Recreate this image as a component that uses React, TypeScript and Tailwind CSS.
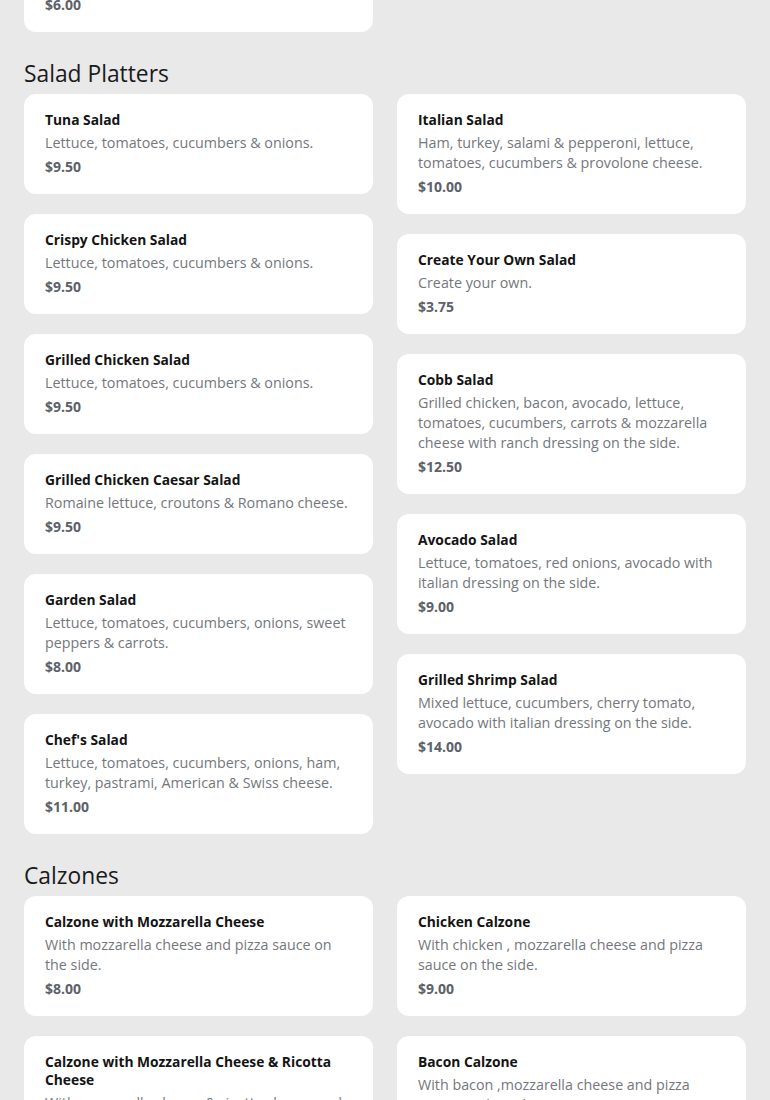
type Item = { name: string; desc: string; price: string };

type Section = { title?: string; left: Item[]; right: Item[] };

const SECTIONS: Section[] = [
  {
    left: [
      {
        name: "Side of French Fries",
        desc: "Crispy golden fries.",
        price: "$6.00",
      },
    ],
    right: [],
  },
  {
    title: "Salad Platters",
    left: [
      { name: "Tuna Salad", desc: "Lettuce, tomatoes, cucumbers & onions.", price: "$9.50" },
      { name: "Crispy Chicken Salad", desc: "Lettuce, tomatoes, cucumbers & onions.", price: "$9.50" },
      { name: "Grilled Chicken Salad", desc: "Lettuce, tomatoes, cucumbers & onions.", price: "$9.50" },
      { name: "Grilled Chicken Caesar Salad", desc: "Romaine lettuce, croutons & Romano cheese.", price: "$9.50" },
      { name: "Garden Salad", desc: "Lettuce, tomatoes, cucumbers, onions, sweet peppers & carrots.", price: "$8.00" },
      {
        name: "Chef's Salad",
        desc: "Lettuce, tomatoes, cucumbers, onions, ham, turkey, pastrami, American & Swiss cheese.",
        price: "$11.00",
      },
    ],
    right: [
      {
        name: "Italian Salad",
        desc: "Ham, turkey, salami & pepperoni, lettuce, tomatoes, cucumbers & provolone cheese.",
        price: "$10.00",
      },
      { name: "Create Your Own Salad", desc: "Create your own.", price: "$3.75" },
      {
        name: "Cobb Salad",
        desc: "Grilled chicken, bacon, avocado, lettuce, tomatoes, cucumbers, carrots & mozzarella cheese with ranch dressing on the side.",
        price: "$12.50",
      },
      {
        name: "Avocado Salad",
        desc: "Lettuce, tomatoes, red onions, avocado with italian dressing on the side.",
        price: "$9.00",
      },
      {
        name: "Grilled Shrimp Salad",
        desc: "Mixed lettuce, cucumbers, cherry tomato, avocado with italian dressing on the side.",
        price: "$14.00",
      },
    ],
  },
  {
    title: "Calzones",
    left: [
      {
        name: "Calzone with Mozzarella Cheese",
        desc: "With mozzarella cheese and pizza sauce on the side.",
        price: "$8.00",
      },
      {
        name: "Calzone with Mozzarella Cheese & Ricotta Cheese",
        desc: "With mozzarella cheese & ricotta cheese and pizza sauce on the side.",
        price: "$9.00",
      },
    ],
    right: [
      {
        name: "Chicken Calzone",
        desc: "With chicken , mozzarella cheese and pizza sauce on the side.",
        price: "$9.00",
      },
      {
        name: "Bacon Calzone",
        desc: "With bacon ,mozzarella cheese and pizza sauce on the side.",
        price: "$9.00",
      },
    ],
  },
];

function MenuCard({ item }: { item: Item }) {
  return (
    <div className="flex flex-col gap-1 rounded-xl bg-white px-[21px] pb-[17px] pt-[17px]">
      <h3 className="text-[13.8px] font-bold leading-[18px] text-[#141414]">{item.name}</h3>
      <p className="text-[14.3px] leading-5 text-[#74777d]">{item.desc}</p>
      <p className="text-[14px] font-bold leading-5 text-[#5c616a]">{item.price}</p>
    </div>
  );
}

export default function App() {
  return (
    <div
      className="min-h-[1100px] bg-[#e9e9e9] px-6 pb-10"
      style={{ fontFamily: '"Open Sans", "Noto Sans", sans-serif' }}
    >
      <div className="-mt-[68px] flex flex-col gap-7">
        {SECTIONS.map((section, i) => (
          <section key={i} className="flex flex-col gap-[6px]">
            {section.title ? (
              <h2 className="text-[22.8px] leading-7 text-[#1a1a1a]">{section.title}</h2>
            ) : null}
            <div className="grid grid-cols-2 items-start gap-6">
              <div className="flex flex-col gap-5">
                {section.left.map((item) => (
                  <MenuCard key={item.name} item={item} />
                ))}
              </div>
              <div className="flex flex-col gap-5">
                {section.right.map((item) => (
                  <MenuCard key={item.name} item={item} />
                ))}
              </div>
            </div>
          </section>
        ))}
      </div>
    </div>
  );
}
